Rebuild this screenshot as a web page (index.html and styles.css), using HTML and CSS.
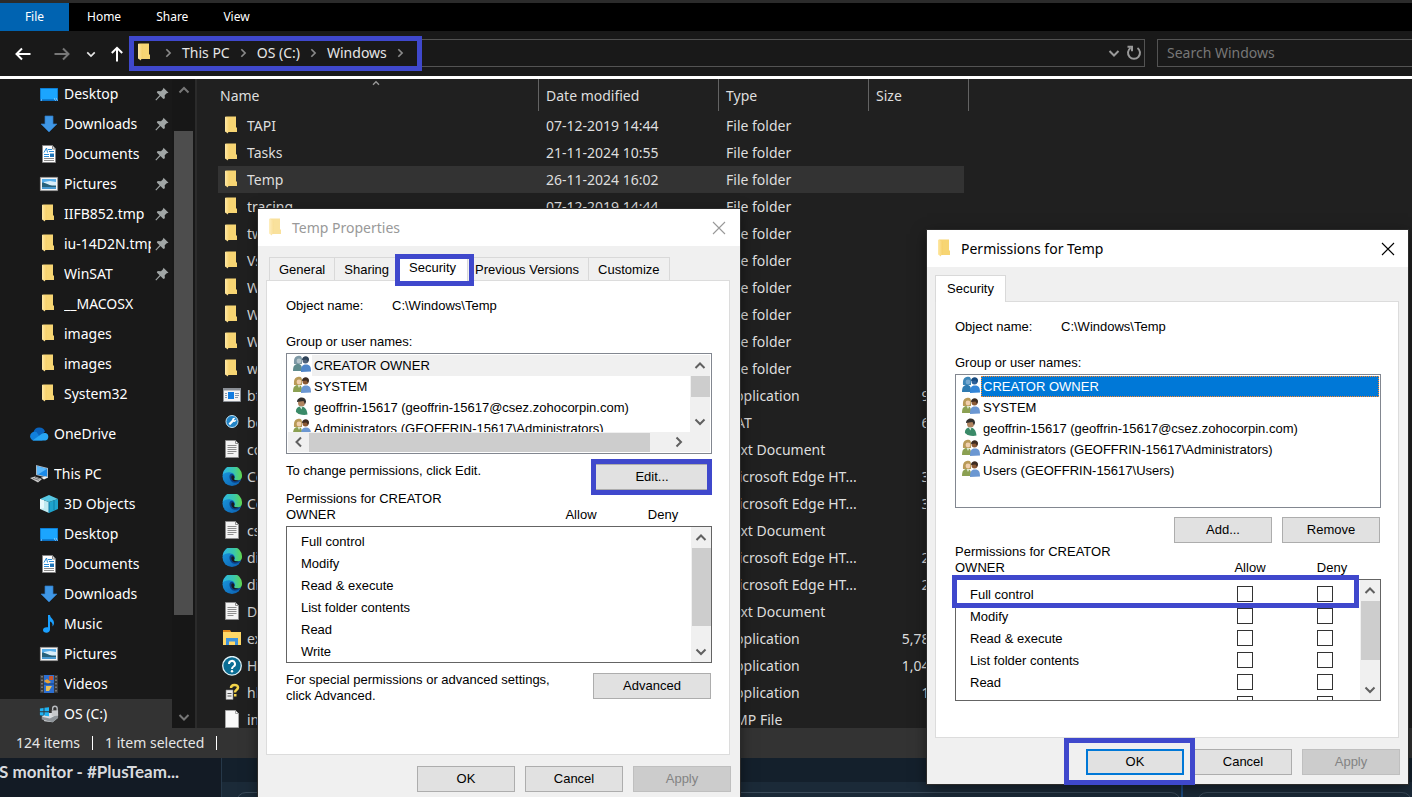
FILE: index.html
```
<!DOCTYPE html>
<html lang="en">
<head>
    <meta charset="utf-8">
    <meta name="viewport" content="width=device-width, initial-scale=1.0">
    <title>Windows</title>
    <link rel="stylesheet" href="styles.css">
</head>
<body>
    <!-- icons -->
    <svg class="sprites" aria-hidden="true">
        <defs>
            <linearGradient id="gBlue" x1="0" y1="0" x2="1" y2="1"><stop offset="0" stop-color="#1b9de2"/><stop offset="1" stop-color="#0b5cad"/></linearGradient>
            <linearGradient id="gGreen" x1="0" y1="0" x2="1" y2="0"><stop offset="0" stop-color="#2cb5e8"/><stop offset=".6" stop-color="#3cc8a8"/><stop offset="1" stop-color="#62d84e"/></linearGradient>
            <linearGradient id="gFold" x1="0" y1="0" x2="1" y2="0"><stop offset="0" stop-color="#ffe9a6"/><stop offset="1" stop-color="#f6d06a"/></linearGradient>
        </defs>
        <symbol id="folder" viewBox="0 0 20 20"><path fill="#f7d573" d="M4 .5h10v11h1v4.500H6z"/><path fill="url(#gFold)" d="M3 .5l4.500 2v13.500l-1.500.2v1.300L3 15.500z"/></symbol>
        <symbol id="desktop" viewBox="0 0 20 20"><path fill="#0a6fc2" d="M1 4h18v13H1z"/><path fill="#1ba5ff" d="M1.700 4.700h16.600v10.600H1.700z"/><path fill="#bfe4ff" d="M2 15.500h1v1H2zm13-1h1v1h-1zm2 0h1v1h-1zm-1 1.300h1v.8h-1zm2 0h1v.8h-1z"/></symbol>
        <symbol id="download" viewBox="0 0 20 20"><path fill="#3f97e6" stroke="#2c7ac4" stroke-width=".7" d="M6 2h8v8h4l-8 8-8-8h4z"/></symbol>
        <symbol id="document" viewBox="0 0 20 20"><path fill="#fff" stroke="#858585" d="M3.500 1.500h10l3 3.500v13.500h-13z"/><path fill="none" stroke="#858585" d="M13.500 1.500V5h3"/><path stroke="#2a8dd8" fill="none" d="M5 8.500l2.500-4.500 1 4.500M9 5.500h4M10 7.500h5M5 10.500h5M5 12.500h5"/><path fill="#1f74b8" d="M11 9.500h4v3.500h-4z"/><path stroke="#8a8a8a" d="M5 14.500h10M5 16.500h10"/></symbol>
        <symbol id="picture" viewBox="0 0 20 20"><path fill="#f5f5f5" stroke="#999" stroke-width=".8" d="M1.400 3.400h17.200v13.200H1.400z"/><path fill="#56aeea" d="M3 5h14v4H3z"/><path fill="#d9eefa" d="M5 8l6-1 6 1v4H5z"/><path fill="#28617a" d="M3 8.500c4 .5 7 2.500 10 3h4V13H3z"/><path fill="#4798cf" d="M3 13h14v2H3z"/></symbol>
        <symbol id="onedrive" viewBox="0 0 20 20"><path fill="#0a63bd" d="M4.500 8A6 6 0 0 1 16 7.500l-5 5z"/><path fill="#1180dc" d="M4 16.500A4.300 4.300 0 1 1 7.500 8l6 8.500z"/><path fill="#28a6f4" d="M3.500 16.500l9-6.500a5 5 0 0 1 4-1 3.900 3.900 0 0 1 0 7.500z"/></symbol>
        <symbol id="pc" viewBox="0 0 20 20"><path fill="#a9b8c4" d="M7 1l12 3v10L7 11z"/><path fill="#1b8bea" d="M8 2.200l10 2.600v8L8 10.200z"/><path fill="#5db9fb" d="M8 2.200l10 2.600-9 5.600-1-.2z"/><path fill="#c9c9c9" d="M1 14l5-1.500 7 2.500-4 3.500z"/><path stroke="#777" d="M4 14.300l6 2M6 13.300l5 1.700"/><path fill="#eee" d="M12 13.500l5-1 2 1-4 2z"/></symbol>
        <symbol id="cube" viewBox="0 0 20 20"><path fill="#bfeaf0" d="M1 5l9 3v11l-9-4z"/><path fill="#1fa3cc" d="M10 8l9-3v10l-9 4z"/><path fill="#57c8e3" d="M1 5l9-4 9 4-9 3z"/><path fill="#e6fafc" d="M1 5l4 1.300v8L1 15z"/><path stroke="#0d7ea8" d="M10 8v11M15 6v10"/></symbol>
        <symbol id="music" viewBox="0 0 20 20"><path fill="#1aa0ff" d="M9 1h2c.5 3.500 4 4 4 8 0 1.500-.7 2.600-1.500 3.500.6-3-1-4.500-2.500-5v8c0 2-1.500 3.200-3.500 3.200S4 17.700 4 16s1.700-3.200 5-2.700z"/></symbol>
        <symbol id="video" viewBox="0 0 20 20"><path fill="#3a3a3a" d="M1 1h18v18H1z"/><path fill="#2d6fd0" d="M5 1h10v18H5z"/><path fill="#e6a23a" d="M5 7l3-2 4 3-3 2z"/><path fill="#c9562b" d="M10 2h4v4h-4z"/><path fill="#e8c05a" d="M7 12h6l-3 5H7z"/><path fill="#123a78" d="M5 9.500h10v1H5z"/><path stroke="#8a8a8a" stroke-width="1.500" stroke-dasharray="1.500 2" d="M3 2v17M17 2v17"/></symbol>
        <symbol id="drive" viewBox="0 0 22 20"><path fill="#d9dcdf" d="M3 13l6-4h11l1 5-6 5-9-1z"/><path fill="#8e9499" d="M3 13l9 2 9-5v4l-6 5-12-3z"/><path fill="none" stroke="#b9bcc0" stroke-width="1.500" d="M15 6V4a2.500 2.500 0 0 1 5 0v3"/><path fill="#c7c9cc" d="M14 6h7v6h-7z"/><path fill="#1fb4f4" d="M1 4l4-.6V7H1zm5-.8L11 2.500V7H6zM1 8h4v4l-4-.6zm5 0h5v4.500L6 12z"/></symbol>
        <symbol id="pin" viewBox="0 0 14 14"><path fill="#a0a5a5" d="M8.500.7l5 5-1.800.5-2 2 .2 3-1.500.8-2.900-2.900L1.200 13.500l-.8-.7L4.600 8.300 1.800 5.600l.8-1.500 3.400.2 2-2z"/></symbol>
        <symbol id="text" viewBox="0 0 20 20"><path fill="#f4f4f4" stroke="#8d8d8d" d="M3.500 .5h10l3 3v14h-13z"/><path fill="none" stroke="#8d8d8d" d="M13.500 .5v3h3M5.500 5.500h9M5.500 7.500h9M5.500 9.500h9M5.500 11.500h9M5.500 13.500h6"/></symbol>
        <symbol id="blank" viewBox="0 0 20 20"><path fill="#f9f9f9" stroke="#a5a5a5" d="M3.500 .5h10l3 3v14h-13z"/><path fill="none" stroke="#a5a5a5" d="M13.500 .5v3h3"/></symbol>
        <symbol id="app" viewBox="0 0 20 20"><path fill="#f4f4f4" stroke="#8b9097" d="M1.500 2.500h17v13h-17z"/><path fill="#8b9097" d="M1 2h18v2.500H1z"/><path fill="#0f7be0" d="M6 6h6v7H6z"/><path stroke="#89a" d="M3 7.500h2M3 9.500h2M3 11.500h2M13 7.500h4M13 9.500h4M13 11.500h3"/></symbol>
        <symbol id="dat" viewBox="0 0 20 20"><circle cx="10" cy="8.500" r="6" fill="#2184c7" stroke="#bfe2f5"/><path fill="#fff" d="M6.500 10.500L10 7a2.400 2.400 0 0 1 3.500-2L12 6.500l.8 1 1.700-1.200a2.400 2.400 0 0 1-3 2.500L8 12.300z"/></symbol>
        <symbol id="edge" viewBox="0 0 20 20"><circle cx="10" cy="9.500" r="9.500" fill="url(#gBlue)"/><path fill="url(#gGreen)" d="M.5 8A9.700 9.700 0 0 1 20 9c0 3-2.300 4.500-5 4.500-2 0-3.200-.8-3-1.500 1.600-1.400 1.200-6-3.500-6.500C5 5 2 6 .5 8z"/><path fill="#0c3f86" d="M7.500 9.500c0-2 1.500-3 3-2.500 2.200.8 2.500 3.500 1.500 5-.2 1.200 2.500 2.700 6.500.8-1.500 2.300-3.500 3.200-6 3-3-.3-5-3-5-6.300z"/><path fill="#1a1a1a" d="M9.300 10c0-1.300 1.500-2 2.500-1 .8 1 .6 2.200.2 3-.3.800 2 1.800 5 1-1.500 1-3 1.400-4.500 1.200-2-.4-3.200-2.200-3.200-4.200z"/></symbol>
        <symbol id="explorer" viewBox="0 0 20 20"><path fill="#e08a1c" d="M1 1h7l1.500 2.500H1z"/><path fill="#ffd867" d="M1 3h18v13H1z"/><path fill="#3e93dd" d="M4 16V9h12v7h-3v-3.500H7V16z"/></symbol>
        <symbol id="help" viewBox="0 0 20 20"><circle cx="10" cy="9.800" r="9.300" fill="#0b6d94" stroke="#dff1f7" stroke-width="1.300"/><path fill="none" stroke="#fff" stroke-width="2" d="M7 8a3 3 0 1 1 4.500 2.500c-1 .6-1.500 1-1.500 2.500"/><circle cx="10" cy="15.300" r="1.200" fill="#fff"/></symbol>
        <symbol id="hh" viewBox="0 0 20 20"><path fill="#eee" stroke="#888" stroke-width=".6" d="M4 7h7v9.500H4z"/><path stroke="#555" d="M5.500 10.500h4M5.500 13h4"/><path fill="none" stroke="#f2d34a" stroke-width="2.500" d="M9 5c0-4 7-4 7-.5 0 2.500-3 2-3 5"/><path fill="#f2d34a" d="M12 11h2.500v2.500H12z"/></symbol>
        <symbol id="group" viewBox="0 0 18 18"><path fill="#b99a58" d="M1 9c0-3-.5-7 3.500-8S9 2 9 5v4z"/><circle cx="6" cy="6" r="2.400" fill="#f0cfae"/><path fill="#8ba052" d="M0 16c0-5 1.500-7 5-7s4 2 4 7z"/><path fill="#dfe6ce" d="M4.500 9h3L6 12z"/><circle cx="12.500" cy="5.500" r="3" fill="#8b5a35"/><path fill="#3c2b20" d="M9 5c0-5 7.500-5 7 0l-1 2-1.500-2.500z"/><path fill="#6b97d2" d="M8 17c0-5 1-7.500 5-7.500s5 2.500 5 7z"/></symbol>
        <symbol id="groupGrey" viewBox="0 0 18 18"><path fill="#7e99a6" d="M1 9c0-3-.5-7 3.500-8S9 2 9 5v4z"/><circle cx="6" cy="6" r="2.400" fill="#b6c6cc"/><path fill="#5f8b8d" d="M0 16c0-5 1.500-7 5-7s4 2 4 7z"/><circle cx="12.500" cy="5.500" r="3" fill="#4d6078"/><path fill="#2e4258" d="M9 5c0-5 7.500-5 7 0l-1 2-1.500-2.500z"/><path fill="#4f86c9" d="M8 17c0-5 1-7.500 5-7.500s5 2.500 5 7z"/></symbol>
        <symbol id="groupBlue" viewBox="0 0 18 18"><path fill="#3d86b8" d="M1 9c0-3-.5-7 3.500-8S9 2 9 5v4z"/><circle cx="6" cy="6" r="2.400" fill="#75a8cf"/><path fill="#2e7ab0" d="M0 16c0-5 1.500-7 5-7s4 2 4 7z"/><circle cx="12.500" cy="5.500" r="3" fill="#2c5f99"/><path fill="#164a80" d="M9 5c0-5 7.500-5 7 0l-1 2-1.500-2.500z"/><path fill="#3385d8" d="M8 17c0-5 1-7.500 5-7.500s5 2.500 5 7z"/></symbol>
        <symbol id="user" viewBox="0 0 18 18"><circle cx="8.500" cy="6" r="3.500" fill="#b08460"/><path fill="#33302d" d="M4 5c0-6 9.500-6 9 0l-1 2.500L10.500 4z"/><path fill="#3a8a68" d="M3 15c-.5-3 1.500-5.500 5-5.500 4 0 6 3 6.500 8-4 1-9 0-11.500-2.500z"/><path fill="#d7e8df" d="M6.500 9.500h3l-1 3z"/></symbol>
        <symbol id="up" viewBox="0 0 12 12"><path fill="none" stroke="currentColor" stroke-width="2" d="M1.500 8.500L6 4l4.500 4.500"/></symbol>
        <symbol id="down" viewBox="0 0 12 12"><path fill="none" stroke="currentColor" stroke-width="2" d="M1.500 4L6 8.500 10.500 4"/></symbol>
        <symbol id="left" viewBox="0 0 12 12"><path fill="none" stroke="currentColor" stroke-width="2" d="M8.500 1.500L4 6l4.500 4.500"/></symbol>
        <symbol id="right" viewBox="0 0 12 12"><path fill="none" stroke="currentColor" stroke-width="2" d="M4 1.500L8.500 6 4 10.500"/></symbol>
        <symbol id="close" viewBox="0 0 14 14"><path fill="none" stroke="currentColor" stroke-width="1.100" d="M1 1l12 12M13 1L1 13"/></symbol>
    </svg>

    <!-- file explorer -->
    <div class="explorer">
        <div class="menu">
            <button class="menu-item file">File</button>
            <button class="menu-item">Home</button>
            <button class="menu-item">Share</button>
            <button class="menu-item">View</button>
        </div>
        <div class="nav">
            <div class="nav-buttons">
                <button class="nav-btn" aria-label="Back"><svg width="16" height="14" viewBox="0 0 16 14"><path fill="none" stroke="#fff" stroke-width="2" d="M15.500 7H1.500M7 1.500L1.500 7 7 12.500"/></svg></button>
                <button class="nav-btn" aria-label="Forward"><svg width="16" height="14" viewBox="0 0 16 14"><path fill="none" stroke="#777" stroke-width="2" d="M.5 7h14M9 1.500L14.500 7 9 12.500"/></svg></button>
                <button class="nav-btn recent" aria-label="Recent locations"><svg width="10" height="10"><use href="#down"/></svg></button>
                <button class="nav-btn" aria-label="Up"><svg width="12" height="16" viewBox="0 0 12 16"><path fill="none" stroke="#fff" stroke-width="2" d="M6 15.500V2M.8 7L6 1.800 11.200 7"/></svg></button>
            </div>
            <div class="address">
                <svg class="icon"><use href="#folder"/></svg>
                <svg class="chev"><use href="#right"/></svg>
                <button class="crumb">This PC</button>
                <svg class="chev"><use href="#right"/></svg>
                <button class="crumb">OS (C:)</button>
                <svg class="chev"><use href="#right"/></svg>
                <button class="crumb">Windows</button>
                <svg class="chev"><use href="#right"/></svg>
                <span class="address-end">
                    <svg width="12" height="12"><use href="#down"/></svg>
                    <svg width="16" height="16" viewBox="0 0 16 16"><path fill="none" stroke="#9a9a9a" stroke-width="2" d="M11.500 3A6 6 0 1 1 4.500 3M1.500 1.800H6v4.500"/></svg>
                </span>
                <span class="mark mark-address"></span>
            </div>
            <input class="search" type="text" placeholder="Search Windows" aria-label="Search Windows">
        </div>
        <div class="main">
            <div class="side">
                <nav class="tree">
                    <a class="item" href="#"><svg class="icon"><use href="#desktop"/></svg><span>Desktop</span><svg class="pin"><use href="#pin"/></svg></a>
                    <a class="item" href="#"><svg class="icon"><use href="#download"/></svg><span>Downloads</span><svg class="pin"><use href="#pin"/></svg></a>
                    <a class="item" href="#"><svg class="icon"><use href="#document"/></svg><span>Documents</span><svg class="pin"><use href="#pin"/></svg></a>
                    <a class="item" href="#"><svg class="icon"><use href="#picture"/></svg><span>Pictures</span><svg class="pin"><use href="#pin"/></svg></a>
                    <a class="item" href="#"><svg class="icon"><use href="#folder"/></svg><span>IIFB852.tmp</span><svg class="pin"><use href="#pin"/></svg></a>
                    <a class="item" href="#"><svg class="icon"><use href="#folder"/></svg><span>iu-14D2N.tmp</span><svg class="pin"><use href="#pin"/></svg></a>
                    <a class="item" href="#"><svg class="icon"><use href="#folder"/></svg><span>WinSAT</span><svg class="pin"><use href="#pin"/></svg></a>
                    <a class="item" href="#"><svg class="icon"><use href="#folder"/></svg><span>__MACOSX</span></a>
                    <a class="item" href="#"><svg class="icon"><use href="#folder"/></svg><span>images</span></a>
                    <a class="item" href="#"><svg class="icon"><use href="#folder"/></svg><span>images</span></a>
                    <a class="item" href="#"><svg class="icon"><use href="#folder"/></svg><span>System32</span></a>
                    <a class="item root" href="#"><svg class="icon"><use href="#onedrive"/></svg><span>OneDrive</span></a>
                    <a class="item root" href="#"><svg class="icon"><use href="#pc"/></svg><span>This PC</span></a>
                    <a class="item" href="#"><svg class="icon"><use href="#cube"/></svg><span>3D Objects</span></a>
                    <a class="item" href="#"><svg class="icon"><use href="#desktop"/></svg><span>Desktop</span></a>
                    <a class="item" href="#"><svg class="icon"><use href="#document"/></svg><span>Documents</span></a>
                    <a class="item" href="#"><svg class="icon"><use href="#download"/></svg><span>Downloads</span></a>
                    <a class="item" href="#"><svg class="icon"><use href="#music"/></svg><span>Music</span></a>
                    <a class="item" href="#"><svg class="icon"><use href="#picture"/></svg><span>Pictures</span></a>
                    <a class="item" href="#"><svg class="icon"><use href="#video"/></svg><span>Videos</span></a>
                    <a class="item selected" href="#"><svg class="icon"><use href="#drive"/></svg><span>OS (C:)</span></a>
                </nav>
                <div class="side-scroll">
                    <svg width="12" height="12"><use href="#up"/></svg>
                    <div class="side-thumb"></div>
                    <svg width="12" height="12"><use href="#down"/></svg>
                </div>
            </div>
            <div class="files">
                <table class="file-table">
                    <thead>
                        <tr><th class="c-name">Name<svg class="sort"><use href="#up"/></svg></th><th class="c-date">Date modified</th><th class="c-type">Type</th><th class="c-size">Size</th></tr>
                    </thead>
                    <tbody>
                        <tr><td><svg class="icon"><use href="#folder"/></svg>TAPI</td><td>07-12-2019 14:44</td><td>File folder</td><td></td></tr>
                        <tr><td><svg class="icon"><use href="#folder"/></svg>Tasks</td><td>21-11-2024 10:55</td><td>File folder</td><td></td></tr>
                        <tr class="selected"><td><svg class="icon"><use href="#folder"/></svg>Temp</td><td>26-11-2024 16:02</td><td>File folder</td><td></td></tr>
                        <tr><td><svg class="icon"><use href="#folder"/></svg>tracing</td><td>07-12-2019 14:44</td><td>File folder</td><td></td></tr>
                        <tr><td><svg class="icon"><use href="#folder"/></svg>twain_32</td><td></td><td>File folder</td><td></td></tr>
                        <tr><td><svg class="icon"><use href="#folder"/></svg>Vss</td><td></td><td>File folder</td><td></td></tr>
                        <tr><td><svg class="icon"><use href="#folder"/></svg>WaaS</td><td></td><td>File folder</td><td></td></tr>
                        <tr><td><svg class="icon"><use href="#folder"/></svg>Web</td><td></td><td>File folder</td><td></td></tr>
                        <tr><td><svg class="icon"><use href="#folder"/></svg>WinSxS</td><td></td><td>File folder</td><td></td></tr>
                        <tr><td><svg class="icon"><use href="#folder"/></svg>wlansvc</td><td></td><td>File folder</td><td></td></tr>
                        <tr><td><svg class="icon"><use href="#app"/></svg>bfsvc</td><td></td><td>Application</td><td>92 KB</td></tr>
                        <tr><td><svg class="icon"><use href="#dat"/></svg>bootstat</td><td></td><td>DAT</td><td>66 KB</td></tr>
                        <tr><td><svg class="icon"><use href="#text"/></svg>comsetup</td><td></td><td>Text Document</td><td>1 KB</td></tr>
                        <tr><td><svg class="icon"><use href="#edge"/></svg>Core</td><td></td><td>Microsoft Edge HT...</td><td>34 KB</td></tr>
                        <tr><td><svg class="icon"><use href="#edge"/></svg>CoreSingle</td><td></td><td>Microsoft Edge HT...</td><td>34 KB</td></tr>
                        <tr><td><svg class="icon"><use href="#text"/></svg>csup</td><td></td><td>Text Document</td><td>1 KB</td></tr>
                        <tr><td><svg class="icon"><use href="#edge"/></svg>diagerr</td><td></td><td>Microsoft Edge HT...</td><td>23 KB</td></tr>
                        <tr><td><svg class="icon"><use href="#edge"/></svg>diagwrn</td><td></td><td>Microsoft Edge HT...</td><td>23 KB</td></tr>
                        <tr><td><svg class="icon"><use href="#text"/></svg>DtcInstall</td><td></td><td>Text Document</td><td>2 KB</td></tr>
                        <tr><td><svg class="icon"><use href="#explorer"/></svg>explorer</td><td></td><td>Application</td><td>5,784 KB</td></tr>
                        <tr><td><svg class="icon"><use href="#help"/></svg>HelpPane</td><td></td><td>Application</td><td>1,048 KB</td></tr>
                        <tr><td><svg class="icon"><use href="#hh"/></svg>hh</td><td></td><td>Application</td><td>18 KB</td></tr>
                        <tr><td><svg class="icon"><use href="#blank"/></svg>install</td><td></td><td>BMP File</td><td></td></tr>
                    </tbody>
                </table>
            </div>
        </div>
        <div class="status">
            <span class="status-part">124 items</span>
            <span class="status-part">1 item selected</span>
        </div>
    </div>

    <!-- window behind the explorer -->
    <div class="behind">
        <div class="behind-title"><span>S monitor - #PlusTeam...</span></div>
        <div class="behind-panel"><div class="behind-card"></div></div>
        <div class="behind-panel last"><div class="behind-card"></div></div>
    </div>

    <!-- Temp Properties -->
    <div class="dialog props">
        <div class="title inactive">
            <svg class="icon"><use href="#folder"/></svg>
            <span>Temp Properties</span>
            <button class="close" aria-label="Close"><svg width="14" height="14"><use href="#close"/></svg></button>
        </div>
        <div class="tabs">
            <button class="tab">General</button>
            <button class="tab">Sharing</button>
            <button class="tab active">Security<span class="mark mark-tab"></span></button>
            <button class="tab">Previous Versions</button>
            <button class="tab">Customize</button>
        </div>
        <div class="page">
            <div class="object"><span class="object-label">Object name:</span><span>C:\Windows\Temp</span></div>
            <div class="group-label">Group or user names:</div>
            <div class="box users">
                <div class="users-top">
                    <ul class="user-list">
                        <li class="current"><svg><use href="#groupGrey"/></svg><span>CREATOR OWNER</span></li>
                        <li><svg><use href="#group"/></svg><span>SYSTEM</span></li>
                        <li><svg><use href="#user"/></svg><span>geoffrin-15617 (geoffrin-15617@csez.zohocorpin.com)</span></li>
                        <li><svg><use href="#group"/></svg><span>Administrators (GEOFFRIN-15617\Administrators)</span></li>
                    </ul>
                    <div class="vscroll"><svg><use href="#up"/></svg><div class="thumb"></div><svg><use href="#down"/></svg></div>
                </div>
                <div class="hscroll"><svg><use href="#left"/></svg><div class="thumb"></div><svg><use href="#right"/></svg></div>
            </div>
            <div class="line">
                <span>To change permissions, click Edit.</span>
                <button class="btn wide">Edit...<span class="mark mark-edit"></span></button>
            </div>
            <div class="perm-head"><span class="perm-title">Permissions for CREATOR<br>OWNER</span><span class="col">Allow</span><span class="col">Deny</span></div>
            <div class="box perms">
                <table class="perm-table">
                    <tr><th>Full control</th></tr>
                    <tr><th>Modify</th></tr>
                    <tr><th>Read &amp; execute</th></tr>
                    <tr><th>List folder contents</th></tr>
                    <tr><th>Read</th></tr>
                    <tr><th>Write</th></tr>
                </table>
                <div class="vscroll"><svg><use href="#up"/></svg><div class="thumb"></div><svg><use href="#down"/></svg></div>
            </div>
            <div class="line">
                <span>For special permissions or advanced settings,<br>click Advanced.</span>
                <button class="btn wide">Advanced</button>
            </div>
        </div>
        <div class="footer">
            <button class="btn">OK</button>
            <button class="btn">Cancel</button>
            <button class="btn" disabled>Apply</button>
        </div>
    </div>

    <!-- Permissions for Temp -->
    <div class="dialog permissions">
        <div class="title">
            <svg class="icon"><use href="#folder"/></svg>
            <span>Permissions for Temp</span>
            <button class="close" aria-label="Close"><svg width="14" height="14"><use href="#close"/></svg></button>
        </div>
        <div class="tabs">
            <button class="tab active">Security</button>
        </div>
        <div class="page">
            <div class="object"><span class="object-label">Object name:</span><span>C:\Windows\Temp</span></div>
            <div class="group-label">Group or user names:</div>
            <div class="box users">
                <ul class="user-list">
                    <li class="focused"><svg><use href="#groupBlue"/></svg><span>CREATOR OWNER</span></li>
                    <li><svg><use href="#group"/></svg><span>SYSTEM</span></li>
                    <li><svg><use href="#user"/></svg><span>geoffrin-15617 (geoffrin-15617@csez.zohocorpin.com)</span></li>
                    <li><svg><use href="#group"/></svg><span>Administrators (GEOFFRIN-15617\Administrators)</span></li>
                    <li><svg><use href="#group"/></svg><span>Users (GEOFFRIN-15617\Users)</span></li>
                </ul>
            </div>
            <div class="user-buttons">
                <button class="btn">Add...</button>
                <button class="btn">Remove</button>
            </div>
            <div class="perm-head"><span class="perm-title">Permissions for CREATOR<br>OWNER</span><span class="col">Allow</span><span class="col">Deny</span></div>
            <div class="perm-wrap">
                <div class="box perms">
                    <table class="perm-table">
                        <tr><th>Full control</th><td class="allow"><input type="checkbox" aria-label="Allow Full control"></td><td class="deny"><input type="checkbox" aria-label="Deny Full control"></td></tr>
                        <tr><th>Modify</th><td class="allow"><input type="checkbox" aria-label="Allow Modify"></td><td class="deny"><input type="checkbox" aria-label="Deny Modify"></td></tr>
                        <tr><th>Read &amp; execute</th><td class="allow"><input type="checkbox" aria-label="Allow Read &amp; execute"></td><td class="deny"><input type="checkbox" aria-label="Deny Read &amp; execute"></td></tr>
                        <tr><th>List folder contents</th><td class="allow"><input type="checkbox" aria-label="Allow List folder contents"></td><td class="deny"><input type="checkbox" aria-label="Deny List folder contents"></td></tr>
                        <tr><th>Read</th><td class="allow"><input type="checkbox" aria-label="Allow Read"></td><td class="deny"><input type="checkbox" aria-label="Deny Read"></td></tr>
                        <tr><th>Write</th><td class="allow"><input type="checkbox" aria-label="Allow Write"></td><td class="deny"><input type="checkbox" aria-label="Deny Write"></td></tr>
                    </table>
                    <div class="vscroll"><svg><use href="#up"/></svg><div class="thumb"></div><svg><use href="#down"/></svg></div>
                </div>
                <span class="mark mark-full"></span>
            </div>
        </div>
        <div class="footer">
            <button class="btn default">OK<span class="mark mark-ok"></span></button>
            <button class="btn">Cancel</button>
            <button class="btn" disabled>Apply</button>
        </div>
    </div>
</body>
</html>
```
FILE: styles.css
```
* {
    box-sizing: border-box;
}
body {
    margin: 0;
    height: 100vh;
    display: flex;
    flex-direction: column;
    position: relative;
    overflow: hidden;
    background: #131a24;
    color: #e6e6e6;
    font: 14px/20px "Noto Sans", "Open Sans", sans-serif;
}
button, input {
    font: inherit;
    color: inherit;
    margin: 0;
}
button {
    border: 0;
    padding: 0;
    background: none;
}
svg {
    display: block;
    flex: none;
}
.sprites {
    position: absolute;
    width: 0;
    height: 0;
}
.icon {
    width: 20px;
    height: 20px;
}
/* blue frames over the parts to click */
.mark {
    position: absolute;
    border: 5px solid #3f48cc;
    pointer-events: none;
    z-index: 2;
}

/* explorer */
.explorer {
    flex: 1;
    min-height: 0;
    display: flex;
    flex-direction: column;
    background: #191919;
}
.menu {
    display: flex;
    height: 31px;
    border-top: 3px solid #2b2b2b;
    background: #000;
    font-size: 12px;
}
.menu-item {
    padding: 0 17px 0 18px;
    color: #fff;
}
.menu-item.file {
    width: 69px;
    padding: 0;
    background: #0063b1;
}
.nav {
    display: flex;
    align-items: center;
    height: 45px;
    flex: none;
    padding-bottom: 2px;
}
.nav-buttons {
    display: flex;
    align-items: center;
    justify-content: space-between;
    width: 130px;
    padding: 2px 7px 0 15px;
}
.nav-btn.recent {
    margin: 0 -8px;
}
.address {
    flex: 1;
    display: flex;
    align-items: center;
    position: relative;
    height: 28px;
    padding: 0 2px 0 4px;
    border: 1px solid #535353;
}
.address .chev {
    width: 10px;
    height: 10px;
    margin: 0 9px 0 8px;
    color: #8a8a8a;
}
.address-end {
    display: flex;
    align-items: center;
    gap: 6px;
    margin-left: auto;
    color: #9a9a9a;
}
.mark-address {
    left: -2px;
    top: -4px;
    width: 293px;
    height: 35px;
}
.search {
    width: 255px;
    height: 28px;
    margin-left: 12px;
    padding: 0 9px;
    border: 1px solid #535353;
    border-right: 0;
    background: #191919;
}
.search::placeholder {
    color: #777;
    opacity: 1;
}
.main {
    flex: 1;
    min-height: 0;
    display: flex;
    border-top: 3px solid #fff;
}
.side {
    display: flex;
    width: 197px;
    border-right: 2px solid #2b2b2b;
}
.tree {
    width: 172px;
    overflow: hidden;
}
.item {
    display: flex;
    align-items: center;
    gap: 5px;
    height: 30px;
    padding: 0 3px 0 39px;
    color: #fff;
    text-decoration: none;
    white-space: nowrap;
}
.item span {
    flex: 1;
    overflow: hidden;
}
.item.root {
    margin-top: 10px;
    padding-left: 29px;
}
.item.selected {
    background: #333;
}
.pin {
    width: 14px;
    height: 14px;
    margin-left: -1px;
}
.side-scroll {
    flex: 1;
    display: flex;
    flex-direction: column;
    align-items: center;
    padding: 5px 0;
    background: #171717;
    color: #777;
}
.side-thumb {
    width: 19px;
    height: 484px;
    margin: 35px 0 auto;
    background: #4d4d4d;
}
.files {
    flex: 1;
    overflow: hidden;
    padding-left: 21px;
    background: #202020;
}
.file-table {
    width: 751px;
    table-layout: fixed;
    border-collapse: collapse;
    color: #dedede;
}
.file-table th {
    position: relative;
    height: 33px;
    padding: 0 7px;
    font-weight: normal;
    text-align: left;
    background-image: linear-gradient(#636363, #636363);
    background-size: 1px 32px;
    background-position: right top;
    background-repeat: no-repeat;
}
.file-table .c-name {
    width: 321px;
    padding-left: 2px;
}
.c-date {
    width: 180px;
}
.c-type {
    width: 150px;
}
.sort {
    position: absolute;
    left: 152px;
    top: 0;
    width: 12px;
    height: 8px;
    color: #999;
}
.file-table td {
    height: 27px;
    padding: 0 7px;
    white-space: nowrap;
}
.file-table td:first-child {
    display: flex;
    align-items: center;
    gap: 5px;
    padding-left: 4px;
}
.file-table td:last-child {
    padding-right: 10px;
    text-align: right;
}
.file-table tbody .selected td {
    background: #333;
}
.file-table tbody .selected td:last-child {
    background: linear-gradient(#333, #333) no-repeat;
    background-size: calc(100% - 5px) 100%;
}
.status {
    display: flex;
    align-items: center;
    height: 30px;
    flex: none;
    padding-left: 16px;
    background: #333;
}
.status-part {
    margin-right: 12px;
    padding-right: 12px;
    border-right: 1px solid #fff;
    line-height: 14px;
}

/* window behind */
.behind {
    display: flex;
    height: 39px;
    flex: none;
    background: #131b25;
}
.behind-title {
    display: flex;
    justify-content: flex-end;
    width: 222px;
    padding: 4px 42px 0 0;
    border-right: 1px solid #263849;
    font: bold 17px/20px Lato, sans-serif;
    white-space: nowrap;
    color: #d8dade;
    overflow: hidden;
}
.behind-panel {
    width: 961px;
    padding: 34px 0 0 14px;
    border-right: 2px solid #1c4b80;
    background: linear-gradient(#14202c 24px, #1b2a38 24px);
}
.behind-panel.last {
    flex: 1;
    border-right: 0;
}
.behind-card {
    height: 20px;
    border: 1px solid #3b4b5a;
    border-radius: 10px;
}

/* dialogs */
.dialog {
    position: absolute;
    background: #f0f0f0;
    color: #000;
    font: 13px/16px "Liberation Sans", Arial, sans-serif;
    box-shadow: 0 0 0 1px #2b2b2b, 0 4px 14px rgba(0, 0, 0, .5);
}
.props {
    left: 258px;
    top: 209px;
    width: 482px;
}
.permissions {
    left: 927px;
    top: 230px;
    width: 481px;
}
.title {
    display: flex;
    align-items: center;
    gap: 6px;
    height: 37px;
    padding: 0 13px 0 8px;
    background: #fff;
    font: 14px/20px "Noto Sans", "Open Sans", sans-serif;
}
.title.inactive {
    padding-right: 14px;
    color: #999;
}
.title.inactive .icon {
    opacity: .7;
}
.close {
    margin-left: auto;
}
.tabs {
    display: flex;
    align-items: flex-end;
    padding: 8px 9px 0;
}
.props .tabs {
    height: 34px;
    padding-left: 11px;
}
.tab {
    position: relative;
    height: 23px;
    padding: 2px 9px 0;
    border: 1px solid #d9d9d9;
    border-bottom: 0;
    border-left-width: 0;
    white-space: nowrap;
}
.tab:first-child {
    border-left-width: 1px;
}
.tab.active {
    height: 27px;
    margin: 0 -2px -1px;
    padding: 0 11px;
    border-left-width: 1px;
    background: #fff;
    z-index: 1;
}
.permissions .tab.active {
    margin-left: -1px;
}
.mark-tab {
    left: -3px;
    right: -7px;
    top: -1px;
    height: 32px;
}
.page {
    min-height: 475px;
    margin: 0 10px 0 8px;
    padding: 17px 17px 0 19px;
    border: 1px solid #dcdcdc;
    background: #fff;
}
.permissions .page {
    min-height: 437px;
    margin-right: 9px;
}
.object {
    display: flex;
    margin-bottom: 20px;
}
.object-label {
    width: 106px;
}
.group-label {
    margin-bottom: 3px;
}
.box {
    border: 1px solid #828790;
    overflow: hidden;
}
.users {
    height: 101px;
    padding: 1px;
}
.permissions .users {
    height: 134px;
}
.users-top {
    display: flex;
    height: 77px;
    overflow: hidden;
}
.user-list {
    flex: 1;
    margin: 0;
    padding: 0;
    list-style: none;
}
.user-list li {
    display: flex;
    height: 21px;
    padding-left: 5px;
    white-space: nowrap;
}
.user-list svg {
    width: 18px;
    height: 18px;
    margin-right: 1px;
}
.user-list span {
    flex: 1;
    padding: 1px 0 0 1px;
    border: 1px solid transparent;
    line-height: 18px;
}
.user-list .current span {
    background: #f0f0f0;
}
.user-list .focused span {
    border: 1px dotted #ff8728;
    background: #0078d7;
    color: #fff;
}
.vscroll {
    display: flex;
    flex-direction: column;
    align-items: center;
    flex: none;
    width: 20px;
    background: #f0f0f0;
    color: #606060;
}
.vscroll svg {
    width: 12px;
    height: 21px;
}
.vscroll .thumb {
    width: 19px;
    height: 21px;
    margin-bottom: auto;
    background: #cdcdcd;
}
.props .perms .thumb {
    height: 78px;
}
.permissions .perms .thumb {
    height: 59px;
}
.hscroll {
    display: flex;
    align-items: center;
    height: 20px;
    padding-right: 21px;
    background: #f0f0f0;
    color: #606060;
}
.hscroll svg {
    width: 21px;
    height: 12px;
}
.hscroll .thumb {
    width: 341px;
    height: 19px;
    margin-right: auto;
    background: #cdcdcd;
}
.line {
    display: flex;
    justify-content: space-between;
    align-items: flex-start;
    margin-top: 9px;
}
.btn {
    position: relative;
    width: 98px;
    height: 26px;
    border: 1px solid #adadad;
    background: #e1e1e1;
}
.btn.wide {
    width: 118px;
    margin: 1px 1px 0 0;
}
.btn:disabled {
    border-color: #bfbfbf;
    background: #ccc;
    color: #838383;
}
.btn.default {
    border: 2px solid #0078d7;
}
.mark-edit {
    left: -3px;
    right: -2px;
    top: -6px;
    height: 36px;
}
.perm-head {
    display: flex;
    align-items: flex-end;
    padding-right: 8px;
    margin: 1px 0 3px;
}
.perm-title {
    flex: 1;
}
.col {
    width: 82px;
    text-align: center;
}
.perms {
    display: flex;
    height: 137px;
    border-color: #646464;
}
.permissions .perms {
    height: 122px;
}
.perm-wrap {
    position: relative;
}
.perm-table {
    flex: 1;
    align-self: flex-start;
    margin-top: 3px;
    border-collapse: collapse;
}
.perm-table th {
    height: 22px;
    padding: 2px 0 0 14px;
    font-weight: normal;
    text-align: left;
}
.perm-table td {
    padding: 0;
}
.allow {
    width: 80px;
}
.deny {
    width: 43px;
}
.perm-table input {
    display: block;
    appearance: none;
    width: 16px;
    height: 16px;
    border: 1px solid #333;
    background: #fff;
}
.mark-full {
    left: -3px;
    right: 22px;
    top: -4px;
    height: 33px;
}
.user-buttons {
    display: flex;
    justify-content: flex-end;
    gap: 10px;
    margin: 9px 1px 1px 0;
}
.footer {
    display: flex;
    justify-content: flex-end;
    gap: 10px;
    padding: 11px 8px 9px;
}
.props .footer {
    padding-right: 9px;
}
.mark-ok {
    left: -24px;
    right: -13px;
    top: -13px;
    height: 47px;
}
```
